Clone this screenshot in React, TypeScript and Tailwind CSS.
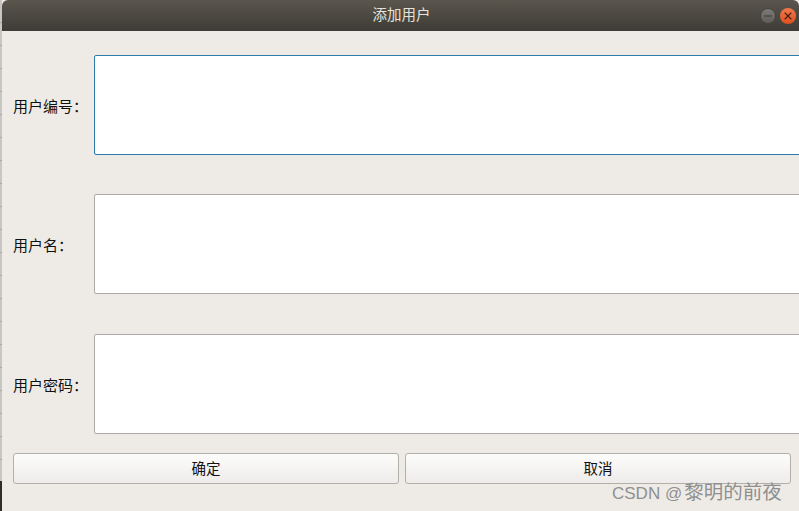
import { Minus, X } from 'lucide-react'

const FONT = "font-['Liberation_Sans','Noto_Sans_CJK_SC',sans-serif]"

const FormRow = ({ label, focused, className }: { label: string; focused?: boolean; className?: string }) => (
  <div className={`flex items-center h-[100px] ${className ?? ''}`}>
    <label className="w-[92px] shrink-0 pl-[11px] pt-[3px] text-[15px] leading-[20px] text-[#111]">{label}：</label>
    <div
      className={`h-full flex-1 -mr-4 bg-white rounded-[2px] border ${focused ? 'border-[#2a7cad]' : 'border-[#aeaba6]'}`}
    />
  </div>
)

const ActionButton = ({ label }: { label: string }) => (
  <button className="flex-1 h-[31px] pt-[3px] rounded-[3px] border border-[#b3afa9] bg-gradient-to-b from-[#fcfcfb] to-[#eeecea] text-[14.5px] text-[#111]">
    {label}
  </button>
)

export default function App() {
  return (
    <div className={`relative flex w-[799px] h-[511px] overflow-hidden bg-[#c4c1bd] ${FONT}`}>
      {/* desktop peeking out on the left */}
      <div className="w-[2px] shrink-0 flex flex-col">
        <div className="flex-1 bg-[repeating-linear-gradient(180deg,#c8c6c3_0px,#c8c6c3_22px,#8f8d8a_23px)]" />
        <div className="h-[30px] bg-[#2f2d2c]" />
      </div>

      <div className="flex-1 min-w-0 flex flex-col bg-[#eeebe7]">
        {/* title bar */}
        <div className="relative h-[31px] shrink-0 flex items-center justify-center rounded-t-[6px] bg-gradient-to-b from-[#5a564e] to-[#3e3c36]">
          <span className="pl-[2px] text-[14.5px] text-[#e6e2d9]">添加用户</span>
          <div className="absolute right-[3px] top-[8px] flex gap-[4px]">
            <span className="w-[16px] h-[16px] rounded-full bg-gradient-to-b from-[#7c7a75] to-[#5f5d58] border border-[#45433e] flex items-center justify-center">
              <Minus size={12} strokeWidth={1.6} className="text-[#2f2d29]" />
            </span>
            <span className="w-[16px] h-[16px] rounded-full bg-gradient-to-b from-[#f2784a] to-[#df4f1f] flex items-center justify-center">
              <X size={12} strokeWidth={2.2} className="text-[#43210f]" />
            </span>
          </div>
        </div>

        {/* form */}
        <div className="pt-[24px]">
          <FormRow label="用户编号" focused />
          <FormRow label="用户名" className="mt-[39px]" />
          <FormRow label="用户密码" className="mt-[40px]" />
        </div>

        <div className="flex gap-[6px] mt-[19px] pl-[11px] pr-[8px]">
          <ActionButton label="确定" />
          <ActionButton label="取消" />
        </div>
      </div>

      {/* CSDN watermark */}
      <span className="absolute left-[612px] top-[480px] text-[17px] leading-[24px] text-[#8f8f8f] whitespace-nowrap">
        CSDN @<span className="ml-[2px] text-[19.5px]">黎明的前夜</span>
      </span>
    </div>
  )
}
